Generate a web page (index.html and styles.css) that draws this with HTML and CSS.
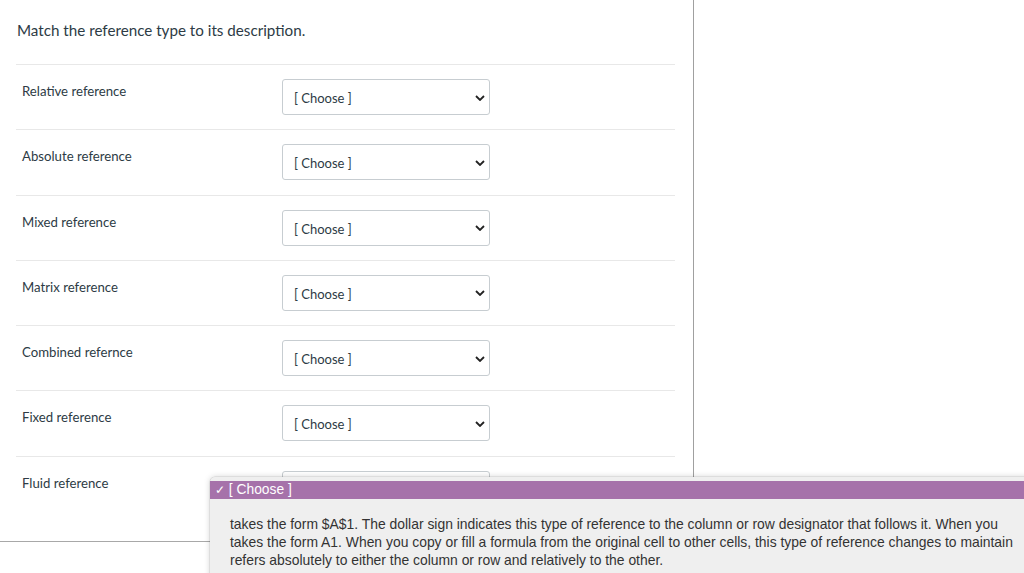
FILE: index.html
```html
<!DOCTYPE html>
<html>
<head>
<meta charset="utf-8">
<link rel="stylesheet" href="styles.css">
</head>
<body>
<div class="page">
  <div class="main">
    <div class="question">
      <p class="title">Match the reference type to its description.</p>
      <div class="row"><div class="label">Relative reference</div><div class="sel"><span>[ Choose ]</span><svg class="chev" viewBox="0 0 10 6" width="10" height="6"><path d="M1 1 L5 5 L9 1" fill="none" stroke="#222" stroke-width="1.8"/></svg></div></div>
      <div class="row"><div class="label">Absolute reference</div><div class="sel"><span>[ Choose ]</span><svg class="chev" viewBox="0 0 10 6" width="10" height="6"><path d="M1 1 L5 5 L9 1" fill="none" stroke="#222" stroke-width="1.8"/></svg></div></div>
      <div class="row"><div class="label">Mixed reference</div><div class="sel"><span>[ Choose ]</span><svg class="chev" viewBox="0 0 10 6" width="10" height="6"><path d="M1 1 L5 5 L9 1" fill="none" stroke="#222" stroke-width="1.8"/></svg></div></div>
      <div class="row"><div class="label">Matrix reference</div><div class="sel"><span>[ Choose ]</span><svg class="chev" viewBox="0 0 10 6" width="10" height="6"><path d="M1 1 L5 5 L9 1" fill="none" stroke="#222" stroke-width="1.8"/></svg></div></div>
      <div class="row"><div class="label">Combined refernce</div><div class="sel"><span>[ Choose ]</span><svg class="chev" viewBox="0 0 10 6" width="10" height="6"><path d="M1 1 L5 5 L9 1" fill="none" stroke="#222" stroke-width="1.8"/></svg></div></div>
      <div class="row"><div class="label">Fixed reference</div><div class="sel"><span>[ Choose ]</span><svg class="chev" viewBox="0 0 10 6" width="10" height="6"><path d="M1 1 L5 5 L9 1" fill="none" stroke="#222" stroke-width="1.8"/></svg></div></div>
      <div class="row"><div class="label">Fluid reference</div><div class="sel"><span>[ Choose ]</span><svg class="chev" viewBox="0 0 10 6" width="10" height="6"><path d="M1 1 L5 5 L9 1" fill="none" stroke="#222" stroke-width="1.8"/></svg></div></div>
    </div>
  </div>
  <div class="side"></div>
</div>
<div class="footer-line"></div>
<div class="menu">
  <div class="opt selected"><span class="check">✓</span> [ Choose ]</div>
  <div class="desc">
    <div class="opt">takes the form $A$1. The dollar sign indicates this type of reference to the column or row designator that follows it. When you</div>
    <div class="opt">takes the form A1. When you copy or fill a formula from the original cell to other cells, this type of reference changes to maintain</div>
    <div class="opt">refers absolutely to either the column or row and relatively to the other.</div>
  </div>
</div>
</body>
</html>
```
FILE: styles.css
```css
html, body {
  margin: 0;
  padding: 0;
  background: #fff;
  overflow: hidden;
}
body {
  width: 1024px;
  height: 573px;
  position: relative;
  font-family: Lato, "Liberation Sans", sans-serif;
  color: #2d3b45;
}
.page {
  display: flex;
  height: 521px;
}
.main {
  width: 694px;
  border-right: 1px solid #a0a0a0;
  box-sizing: border-box;
}
.question {
  padding: 0 18px 0 16px;
}
.title {
  margin: 0;
  padding: 20px 0 0 1px;
  box-sizing: border-box;
  height: 64px;
  font-size: 15.2px;
  line-height: 20px;
  color: #2d3b45;
}
.row {
  display: flex;
  align-items: flex-start;
  border-top: 1px solid #e8e8e8;
  padding-top: 14px;
  height: 50.3px;
}
.label {
  width: 260px;
  padding: 2px 0 0 6px;
  font-size: 13.2px;
  line-height: 20px;
  color: #2d3b45;
}
.sel {
  width: 208px;
  height: 36px;
  box-sizing: border-box;
  border: 1px solid #c7cdd1;
  border-radius: 3px;
  display: flex;
  align-items: center;
  justify-content: space-between;
  padding: 2px 4px 0 11px;
  font-size: 13px;
  color: #2d3b45;
  background: #fff;
}
.chev {
  margin-top: -1px;
}
.footer-line {
  height: 20px;
  border-bottom: 1px solid #a8a8a8;
}
.menu {
  position: absolute;
  left: 210px;
  top: 477px;
  width: 830px;
  height: 110px;
  background: #efefef;
  border-radius: 5px 0 0 5px;
  box-shadow: 0 0 6px rgba(0,0,0,0.18), 0 0 0 0.5px rgba(0,0,0,0.12);
  padding-top: 4px;
  box-sizing: border-box;
  font-family: "Liberation Sans", Arial, sans-serif;
  font-size: 13.9px;
  color: #333;
}
.opt {
  height: 18px;
  line-height: 18px;
  white-space: nowrap;
}
.opt.selected {
  background: #a672aa;
  color: #fff;
  padding-left: 5px;
  font-size: 13.8px;
}
.check {
  font-size: 12px;
}
.desc {
  padding: 16px 0 0 20px;
}
```
